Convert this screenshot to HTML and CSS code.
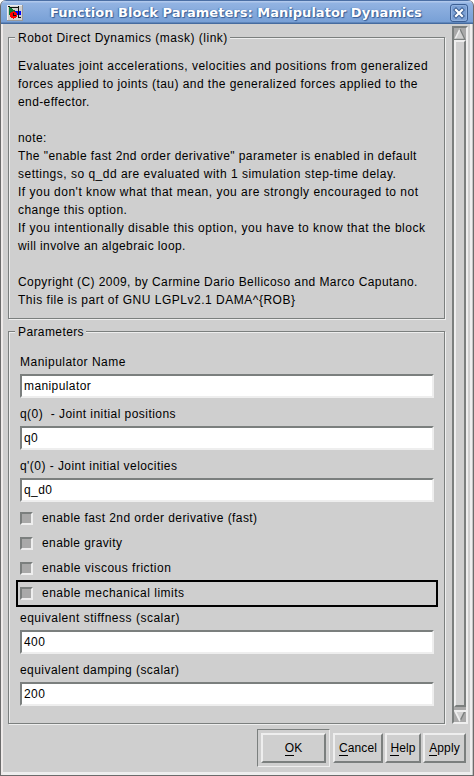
FILE: index.html
```html
<!DOCTYPE html>
<html lang="en">
<head>
<meta charset="utf-8">
<title>Function Block Parameters: Manipulator Dynamics</title>
<link rel="stylesheet" href="styles.css">
</head>
<body>
<div class="window">
  <header class="titlebar">
    <svg class="app-icon" width="16" height="16" viewBox="0 0 16 16" shape-rendering="crispEdges">
      <path fill="#d0d0d0" d="M0 0h16v16H0z"/><path fill="#eee" d="M0 0h16v1H0zM0 0h1v16H0z"/><path fill="#999" d="M15 0h1v16h-1zM0 15h16v1H0z"/>
      <path fill="#00f" d="M7 6h7v4H7z"/><path fill="#087a35" d="M2 2l7 4-7 4z"/><path fill="#111" d="M1 1h2v1H1zM3 2h9v1H3zM11 1h1v12h-1zM12 12h2v1h-2z"/>
      <circle cx="6.5" cy="10" r="3.6" fill="#f00"/><path fill="#111" d="M6 8h1v2h2v1H6z"/>
    </svg>
    <h1>Function Block Parameters: Manipulator Dynamics</h1>
    <svg class="close" width="18" height="18" viewBox="0 0 18 18">
      <rect x=".5" y=".5" width="17" height="17" rx="2.5" fill="#7ba0d4" stroke="#3c5f93"/>
      <rect x="1.5" y="1.5" width="15" height="15" rx="2" fill="none" stroke="#93b3e0"/>
      <path d="M6 6l6 6m0-6l-6 6" stroke="#3c5f93" stroke-width="4.2" stroke-linecap="square"/>
      <path d="M6 6l6 6m0-6l-6 6" stroke="#fff" stroke-width="2.2" stroke-linecap="square"/>
    </svg>
  </header>
  <div class="content">
    <main class="groups">
      <section class="group about">
        <h2 class="wide">Robot Direct Dynamics (mask) (link)</h2>
        <div class="description">
          <p class="loose">Evaluates joint accelerations, velocities and positions from generalized</p>
          <p class="medium">forces applied to joints (tau) and the generalized forces applied to the</p>
          <p>end-effector.</p>
          <p></p>
          <p>note:</p>
          <p class="snug">The "enable fast 2nd order derivative" parameter is enabled in default</p>
          <p class="loose">settings, so q_dd are evaluated with 1 simulation step-time delay.</p>
          <p class="loose">If you don't know what that mean, you are strongly encouraged to not</p>
          <p class="medium">change this option.</p>
          <p class="wide">If you intentionally disable this option, you have to know that the block</p>
          <p>will involve an algebraic loop.</p>
          <p></p>
          <p class="snug">Copyright (C) 2009, by Carmine Dario Bellicoso and Marco Caputano.</p>
          <p class="wide">This file is part of GNU LGPLv2.1 DAMA^{ROB}</p>
        </div>
      </section>
      <section class="group params">
        <h2>Parameters</h2>
        <div class="fields">
          <div class="label loose">Manipulator Name</div><div class="input">manipulator</div>
          <div class="label medium">q(0)&nbsp; - Joint initial positions</div><div class="input">q0</div>
          <div class="label medium">q'(0) - Joint initial velocities</div><div class="input">q_d0</div>
          <div class="check first"><i></i><span class="snug">enable fast 2nd order derivative (fast)</span></div>
          <div class="check"><i></i><span>enable gravity</span></div>
          <div class="check"><i></i><span class="loose">enable viscous friction</span></div>
          <div class="check focused"><i></i><span class="loose">enable mechanical limits</span></div>
          <div class="label wide after">equivalent stiffness (scalar)</div><div class="input">400</div>
          <div class="label medium">equivalent damping (scalar)</div><div class="input">200</div>
        </div>
      </section>
    </main>
    <div class="scrollbar">
      <svg width="12" height="12" viewBox="0 0 12 12"><path fill="#d0d0d0" d="M6 0l6 12H0z"/><path d="M6 1L1 11" stroke="#eee" stroke-width="1.5"/><path d="M6 1l5 10.5H0" fill="none" stroke="#7b7f7e" stroke-width="1.4"/></svg>
      <div class="thumb"></div>
      <svg width="12" height="12" viewBox="0 0 12 12"><path fill="#d0d0d0" d="M0 0h12L6 12z"/><path d="M11 1L6 11" stroke="#7b7f7e" stroke-width="1.5"/><path d="M12 1H1l5 10" fill="none" stroke="#eee" stroke-width="1.8"/></svg>
    </div>
  </div>
  <footer class="buttons">
    <div class="default"><div class="button ok"><span><u>O</u>K</span></div></div>
    <div class="button cancel"><span><u>C</u>ancel</span></div>
    <div class="button help"><span><u>H</u>elp</span></div>
    <div class="button apply"><span><u>A</u>pply</span></div>
  </footer>
</div>
</body>
</html>
```
FILE: styles.css
```css
* { box-sizing: border-box; }
body { margin: 0; background: #fff; font: 12px/18px "Liberation Sans", sans-serif; color: #000; letter-spacing: .4px; }
h1, h2, p { margin: 0; }
.snug { letter-spacing: .43px; }
.medium { letter-spacing: .45px; }
.loose { letter-spacing: .49px; }
.wide { letter-spacing: .51px; }
.window { width: 474px; height: 776px; background: #cfcfcf; border: 1px solid #6b6b6b; border-top: 0; border-radius: 6px 6px 0 0; box-shadow: inset 2px 0 #eeeae9, inset -1px 0 #c4c4c4, inset -3px 0 #eee, inset 0 -3px #eee; display: flex; flex-direction: column; overflow: hidden; }
.titlebar { height: 24px; margin: 0 -1px; padding: 1px 5px 0 6px; flex: none; display: flex; align-items: center; background: linear-gradient(#4b6fa5 0 1px, #b0c8ec 1px 2px, #92b3e2 3px, #78a0d6 22px, #456b9f 23px); border: 1px solid #4b6b98; border-width: 0 1px; border-radius: 6px 6px 0 0; }
.titlebar h1 { flex: 1; font: bold 13px/20px "DejaVu Sans", sans-serif; color: #fff; letter-spacing: .03px; white-space: nowrap; padding-left: 27px; text-shadow: 1px 1px 1px #355b93, -1px 0 1px #4b73aa; }
.app-icon { flex: none; }
.close { flex: none; }
.content { height: 700px; padding: 2px 5px 0 7px; display: flex; justify-content: space-between; }
.groups { width: 438px; }
.group { border: 1px solid #7b7f7e; box-shadow: inset 1px 1px #eee, 1px 1px #eee; width: 437px; }
.group h2 { font-size: 12px; line-height: 14px; font-weight: 400; width: max-content; height: 14px; margin: -7px 0 0 6px; padding: 0 2px 0 3px; background: #cfcfcf; white-space: nowrap; }
.about { margin-top: 11px; height: 282px; }
.params { margin-top: 12px; height: 393px; }
.description { padding: 12px 0 0 9px; }
.description p { height: 18px; white-space: pre; width: max-content; }
.fields { padding: 14px 0 0 11px; }
.label { height: 21px; line-height: 18px; white-space: pre; width: max-content; }
.input { width: 414px; height: 24px; margin-bottom: 7px; background: #fff; border: 2px solid; border-color: #7b7f7e #eee #eee #7b7f7e; padding-left: 2px; line-height: 20px; }
.check { height: 25px; display: flex; align-items: center; gap: 9px; }
.check.first { margin-top: -3px; }
.check i { width: 13px; height: 13px; background: #a9a9a9; border: 2px solid; border-color: #7b7f7e #eee #eee #7b7f7e; }
.check span { margin-bottom: 2px; }
.check.focused { width: 422px; height: 27px; margin: -1px 0 0 -4px; border: 2px solid #000; padding-left: 2px; }
.label.after { margin-top: 2px; }
.scrollbar { width: 16px; height: 698px; background: #a9a9a9; border: 2px solid; border-color: #7b7f7e #eee #eee #7b7f7e; display: flex; flex-direction: column; }
.scrollbar svg { display: block; flex: none; }
.thumb { height: 667px; margin-bottom: 3px; background: #cfcfcf; border: 2px solid; border-color: #eee #7b7f7e #7b7f7e #eee; }
.buttons { display: flex; align-items: flex-start; padding: 5px 0 0 256px; }
.default { width: 73px; height: 38px; border: 1px solid; border-color: #7b7f7e #eee #eee #7b7f7e; padding: 3px; margin-right: 3px; }
.button { height: 30px; background: #cfcfcf; border: 2px solid; border-color: #eee #7b7f7e #7b7f7e #eee; display: flex; justify-content: center; align-items: center; margin: 4px 2px 0 0; letter-spacing: .1px; }
.button u { text-decoration: none; box-shadow: 0 1px #000; display: inline-block; height: 16px; line-height: 18px; }
.ok { width: 65px; margin: 0; }
.cancel { width: 50px; }
.help { width: 36px; }
.apply { width: 43px; }
```
